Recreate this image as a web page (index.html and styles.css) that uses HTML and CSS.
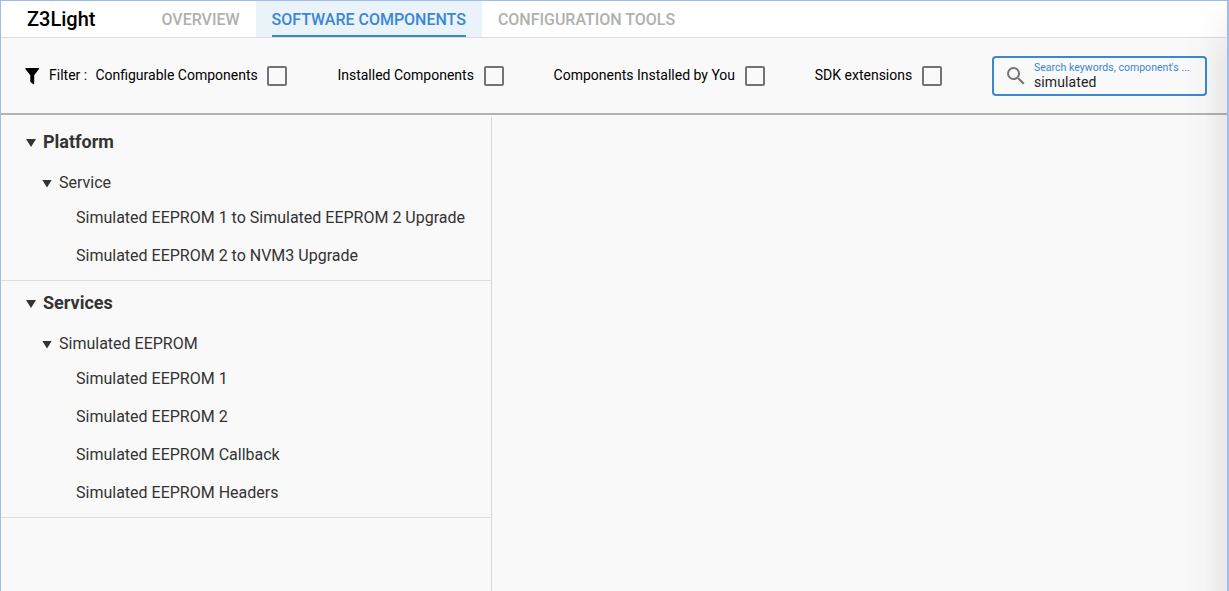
FILE: index.html
```html
<!DOCTYPE html>
<html lang="en">
<head>
<meta charset="utf-8">
<title>Z3Light - Software Components</title>
<link rel="stylesheet" href="styles.css">
</head>
<body>
<div class="window">
  <header class="header">
    <h1 class="title">Z3Light</h1>
    <nav class="tabs">
      <a class="tab tab-overview"><span>OVERVIEW</span></a>
      <a class="tab active"><span>SOFTWARE COMPONENTS</span></a>
      <a class="tab"><span>CONFIGURATION TOOLS</span></a>
    </nav>
  </header>
  <div class="filters">
    <svg class="funnel" width="15" height="17" viewBox="0 0 15 17"><path d="M.9 0H13.6Q14.7 0 14 1L9.2 7.3V15.5Q9 16.6 8.2 16L5.8 14.2Q5.3 13.8 5.3 13.2V7.3L.4 1Q0 0 .9 0Z"/></svg>
    <span class="filter-title">Filter :</span>
    <label class="filter"><span>Configurable Components</span><i class="box"></i></label>
    <label class="filter"><span>Installed Components</span><i class="box"></i></label>
    <label class="filter"><span>Components Installed by You</span><i class="box"></i></label>
    <label class="filter filter-last"><span>SDK extensions</span><i class="box"></i></label>
    <div class="search">
      <svg class="lens" width="24" height="24" viewBox="0 0 24 24"><path d="M15.5 14h-.79l-.28-.27A6.471 6.471 0 0 0 16 9.5 6.5 6.5 0 1 0 9.5 16c1.61 0 3.09-.59 4.23-1.57l.27.28v.79l5 4.99L20.49 19l-4.99-5zm-6 0C7.01 14 5 11.99 5 9.5S7.01 5 9.5 5 14 7.01 14 9.5 11.99 14 9.5 14z"/></svg>
      <div class="search-text">
        <span class="search-label">Search keywords, component's ...</span>
        <span class="search-value">simulated</span>
      </div>
    </div>
  </div>
  <main class="content">
    <div class="tree">
      <section class="section">
        <h2 class="category"><i class="arrow"></i><span>Platform</span></h2>
        <div class="group"><i class="arrow"></i><span>Service</span></div>
        <div class="item">Simulated EEPROM 1 to Simulated EEPROM 2 Upgrade</div>
        <div class="item">Simulated EEPROM 2 to NVM3 Upgrade</div>
      </section>
      <section class="section">
        <h2 class="category"><i class="arrow"></i><span>Services</span></h2>
        <div class="group"><i class="arrow"></i><span>Simulated EEPROM</span></div>
        <div class="item">Simulated EEPROM 1</div>
        <div class="item">Simulated EEPROM 2</div>
        <div class="item">Simulated EEPROM Callback</div>
        <div class="item">Simulated EEPROM Headers</div>
      </section>
    </div>
  </main>
  <div class="edge-shadow"></div>
</div>
</body>
</html>
```
FILE: styles.css
```css
* { box-sizing: border-box; }
body { margin: 0; font-family: Roboto, "Liberation Sans", sans-serif; color: #333; }
.window {
  position: relative;
  display: flex;
  flex-direction: column;
  height: 591px;
  overflow: hidden;
  background: #f9f9f9;
  border: solid #9dbdec;
  border-width: 1px 2px 0 1px;
  white-space: nowrap;
}
.header { display: flex; height: 37px; flex: none; background: #fff; border-bottom: 1px solid #ddd; }
.title { width: 119px; margin: 0; padding-left: 26px; font-size: 20px; font-weight: 500; line-height: 37px; color: #000; }
.tabs { display: flex; }
.tab { display: flex; padding: 0 16px; font-size: 16px; font-weight: 500; line-height: 37px; letter-spacing: -.01px; color: #b0b0b0; }
.tab-overview { margin-left: 25.5px; }
.active { background: #eaf2fa; color: #3a87d4; }
.active span { height: 36px; border-bottom: 2px solid #3a87d4; }
.filters {
  display: flex;
  align-items: center;
  height: 77px;
  flex: none;
  padding: 0 20px 0 24px;
  border-bottom: 2px solid #b3b3b3;
  font-size: 14px;
  color: #000;
}
.filters > .filter-title, .filter span { padding-bottom: 2px; }
.funnel { margin: 1px 9px 0 0; }
.filter-title { width: 46.4px; }
.filter { display: flex; align-items: center; gap: 9.7px; margin-right: 50px; }
.filter-last { margin-right: 0; }
.box { width: 20px; height: 20px; border: 2px solid #737373; border-radius: 2px; }
.search {
  display: flex;
  align-items: center;
  width: 215px;
  height: 40px;
  margin-left: auto;
  padding-left: 10px;
  border: 2px solid #3a87d4;
  border-radius: 4px;
}
.lens { fill: #737373; }
.search-text { display: flex; flex-direction: column; padding-left: 6px; }
.search-label { font-size: 10.5px; line-height: 13px; letter-spacing: .03px; color: #3a87d4; }
.search-value { font-size: 14px; line-height: 17px; letter-spacing: .1px; color: #222; }
.content { display: flex; flex: 1; padding-top: 2px; }
.tree { width: 491px; padding-top: 3px; border-right: 1px solid #d8d8d8; }
.section { padding-bottom: 5px; border-bottom: 1px solid #ddd; }
.category { display: flex; align-items: center; height: 44px; margin: 0; padding-left: 25px; font-size: 18px; font-weight: 700; }
.category span { padding-bottom: 2px; }
.group { display: flex; align-items: center; height: 35px; padding: 2px 0 0 41px; font-size: 16px; }
.item { height: 38px; padding-left: 75px; font-size: 16px; line-height: 37px; }
.arrow { width: 10px; height: 8px; margin: 2px 7px 0 0; background: #333; clip-path: polygon(0 0, 100% 0, 50% 100%); }
.edge-shadow { position: absolute; top: 0; right: 0; bottom: 0; width: 44px; background: linear-gradient(to right, transparent, rgba(0,0,0,.012) 45%, rgba(0,0,0,.065)); mask-image: linear-gradient(transparent, #000 60px); }
```
